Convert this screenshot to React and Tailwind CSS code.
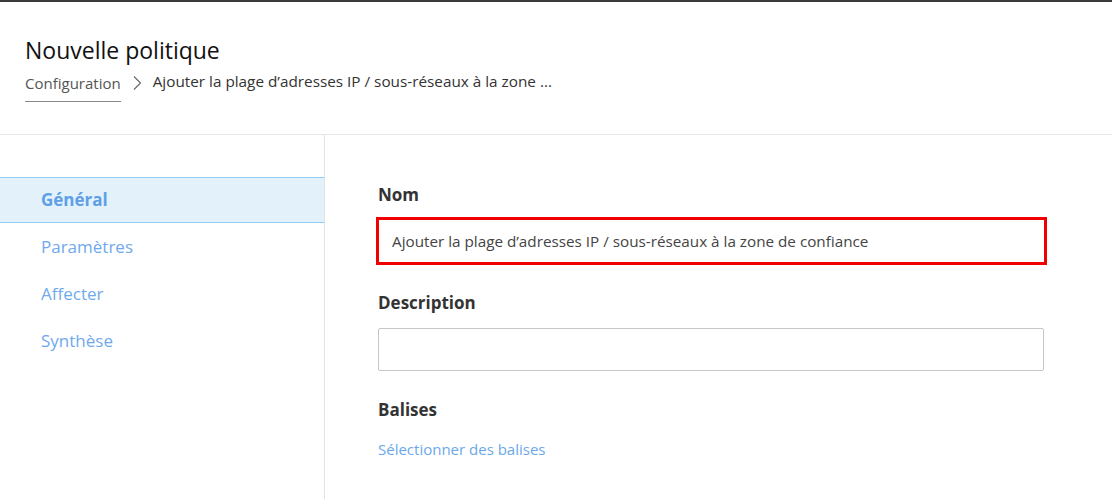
const NAV = ['Général', 'Paramètres', 'Affecter', 'Synthèse'];

export default function App() {
  return (
    <div className="h-[499px] w-[1112px] overflow-hidden border-t-2 border-[#3b3b3b] bg-white font-['Open_Sans',sans-serif]">
      <header className="h-[133px] border-b border-[#e6e6e6] pl-[25px] pt-[33px]">
        <h1 className="text-[23px] leading-[30px] text-[#111]">Nouvelle politique</h1>
        <div className="mt-[4px] flex items-center text-[15px] text-[#333]">
          <span className="border-b border-[#8a8a8a] pb-[6px] pt-[3px] text-[#555]">Configuration</span>
          <svg className="mx-[11px] mb-[5px]" width="10" height="16" viewBox="0 0 10 16" fill="none">
            <path d="M2 1.5 L8.5 8 L2 14.5" stroke="#666" strokeWidth="1.1" />
          </svg>
          <span className="pb-[7px] text-[15.3px]">Ajouter la plage d’adresses IP / sous-réseaux à la zone ...</span>
        </div>
      </header>
      <div className="flex h-[364px]">
        <nav className="w-[325px] shrink-0 border-r border-[#e3e3e3] pt-[42px]">
          {NAV.map((item, i) => (
            <div
              key={item}
              className={
                i === 0
                  ? 'flex h-[46px] items-center border-y border-[#93cdf3] bg-[#e3f1fb] pl-[41px] text-[17px] font-bold text-[#5e9fe6]'
                  : 'flex h-[47px] items-center pl-[41px] text-[17px] text-[#6fa9ec]'
              }
            >
              {item}
            </div>
          ))}
        </nav>
        <main className="flex-1 pl-[51px] pt-[48px]">
          <div className="pl-[2px] text-[17px] font-bold leading-[24px] text-[#333]">Nom</div>
          <div className="mt-[10px] flex h-[48px] w-[671px] items-center border-[3px] border-[#f00000] pl-[13px] text-[15.25px] text-[#444]">
            Ajouter la plage d’adresses IP / sous-réseaux à la zone de confiance
          </div>
          <div className="mt-[26px] pl-[2px] text-[17px] font-bold leading-[24px] text-[#333]">Description</div>
          <div className="ml-[2px] mt-[13px] h-[43px] w-[666px] rounded-[2px] border border-[#c6c6c6]" />
          <div className="mt-[27px] pl-[2px] text-[17px] font-bold leading-[24px] text-[#333]">Balises</div>
          <div className="mt-[16px] pl-[2px] text-[15px] text-[#6ba8ea]">Sélectionner des balises</div>
        </main>
      </div>
    </div>
  );
}
